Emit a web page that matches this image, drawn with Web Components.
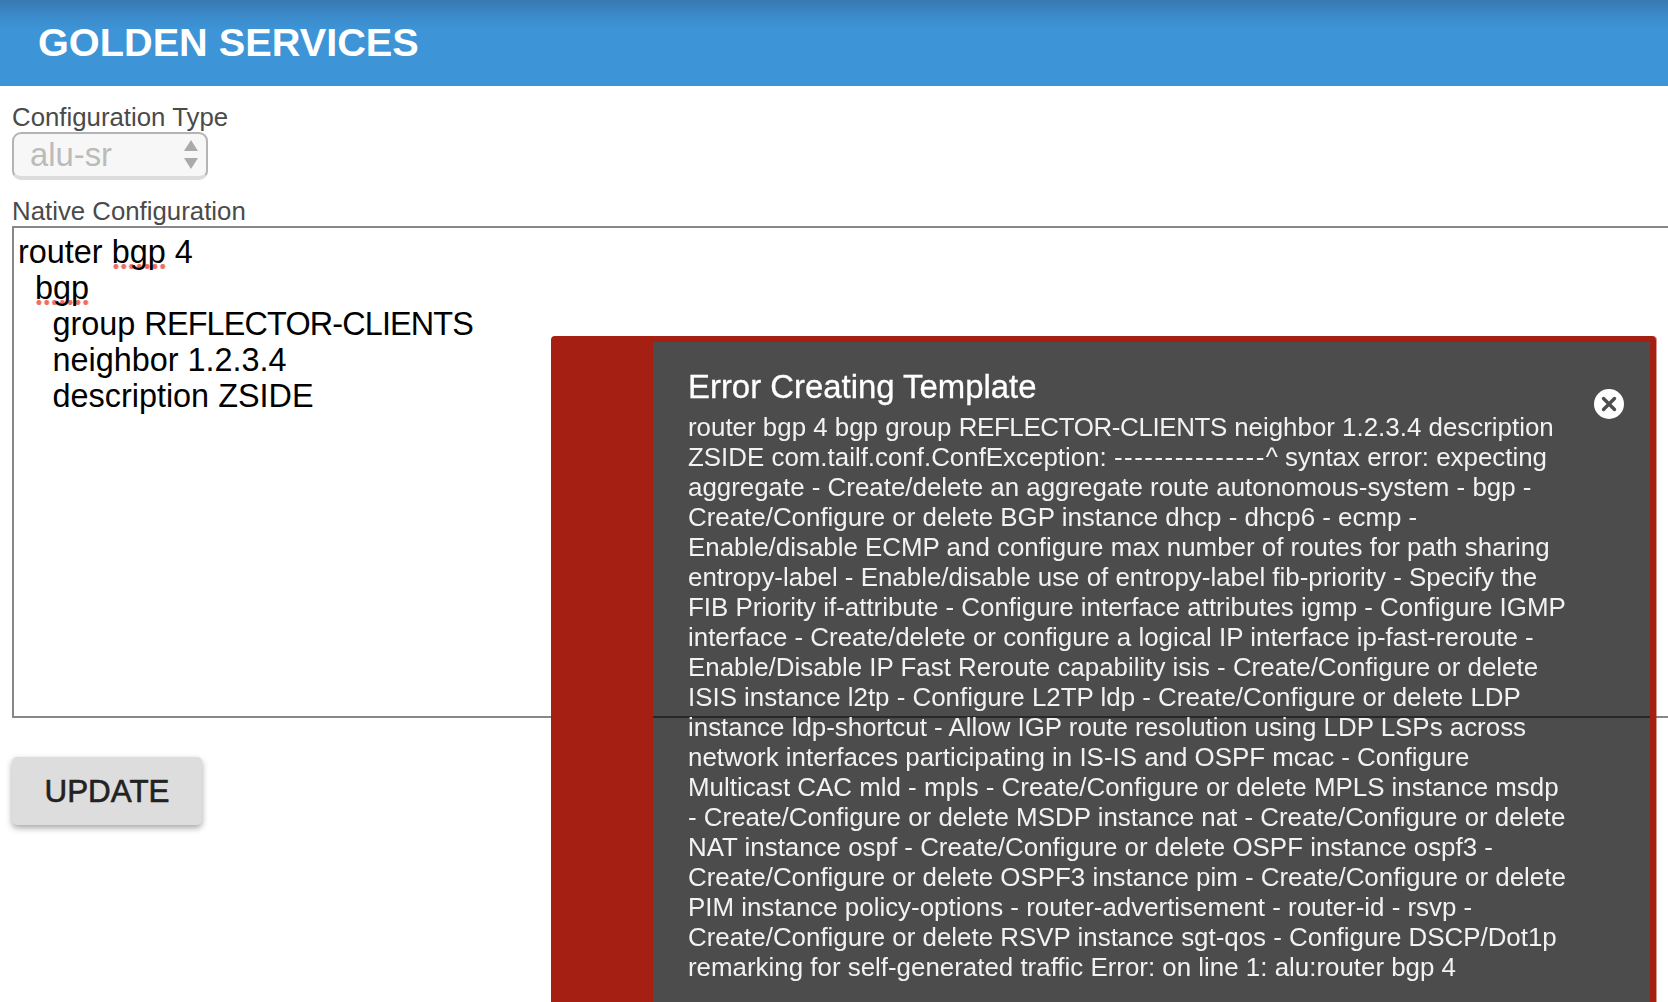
<!DOCTYPE html>
<html>
<head>
<meta charset="utf-8">
<title>Golden Services</title>
<style>
  html, body { margin: 0; height: 100%; overflow: hidden; background: #fff; }
  body { font-family: "Liberation Sans", Arial, sans-serif; }
  main { display: block; padding: 16px 0 0 12px; width: 1700px; }
</style>
</head>
<body>
<app-header>GOLDEN SERVICES</app-header>
<main>
  <field-label>Configuration Type</field-label>
  <config-select value="alu-sr"></config-select>
  <field-label style="margin-top:16px">Native Configuration</field-label>
  <config-editor></config-editor>
  <action-button>UPDATE</action-button>
</main>
<error-toast heading="Error Creating Template"></error-toast>

<script>
class AppHeader extends HTMLElement {
    constructor() {
        super();
        this.attachShadow({ mode: 'open' });
        this.shadowRoot.innerHTML = `
            <style>
                :host {
                    display: flex;
                    align-items: center;
                    height: 86px;
                    box-sizing: border-box;
                    padding: 0 0 2px 38px;
                    background: linear-gradient(#3878b0 0, #3b8bca 16px, #3d94d6 30px);
                    color: #fff;
                    font: bold 39.7px "Liberation Sans", Arial, sans-serif;
                }
            </style>
            <slot></slot>
        `;
    }
}
customElements.define('app-header', AppHeader);

class FieldLabel extends HTMLElement {
    constructor() {
        super();
        this.attachShadow({ mode: 'open' });
        this.shadowRoot.innerHTML = `
            <style>
                :host {
                    display: block;
                    height: 30px;
                    line-height: 30px;
                    color: #4a4a4a;
                    font-size: 25.8px;
                }
            </style>
            <slot></slot>
        `;
    }
}
customElements.define('field-label', FieldLabel);

class ConfigSelect extends HTMLElement {
    constructor() {
        super();
        this.attachShadow({ mode: 'open' });
        this.shadowRoot.innerHTML = `
            <style>
                :host { display: block; width: 195.5px; }
                .box {
                    display: flex;
                    align-items: center;
                    justify-content: space-between;
                    box-sizing: border-box;
                    height: 48px;
                    padding: 0 7px 0 16px;
                    border: 2px solid #b4b4b4;
                    border-bottom: 4px solid #dcdcdc;
                    border-radius: 9px;
                    background: #f7f7f7;
                    color: #bbb;
                    font-size: 32.8px;
                }
                svg { display: block; }
            </style>
            <div class="box">
                <span class="value"></span>
                <svg width="16" height="30" viewBox="0 0 16 30">
                    <path d="M8 0 L15 11 L1 11 Z M1 18 L15 18 L8 29 Z" fill="#aaa"/>
                </svg>
            </div>
        `;
    }

    connectedCallback() {
        this.shadowRoot.querySelector('.value').textContent = this.getAttribute('value');
    }
}
customElements.define('config-select', ConfigSelect);

class ConfigEditor extends HTMLElement {
    constructor() {
        super();
        this.attachShadow({ mode: 'open' });
        this.shadowRoot.innerHTML = `
            <style>
                :host {
                    display: block;
                    box-sizing: border-box;
                    height: 492px;
                    padding: 6px 4px;
                    border: 2px solid #888;
                    background: #fff;
                    color: #000;
                    font: 32.4px/36px "Liberation Sans", Arial, sans-serif;
                }
                div { white-space: pre; }
                .l1 { padding-left: 17px; }
                .l2 { padding-left: 34.5px; }
                .typo {
                    background-image: radial-gradient(circle, #ef6e64 0, #ef6e64 2.2px, transparent 2.8px);
                    background-size: 7.8px 6.8px;
                    background-position: 0 100%;
                    background-repeat: repeat-x;
                }
                .caps { letter-spacing: -.85px; }
            </style>
            <div>router <span class="typo">bgp</span> 4</div>
            <div class="l1"><span class="typo">bgp</span></div>
            <div class="l2">group <span class="caps">REFLECTOR-CLIENTS</span></div>
            <div class="l2">neighbor 1.2.3.4</div>
            <div class="l2">description ZSIDE</div>
        `;
    }
}
customElements.define('config-editor', ConfigEditor);

class ActionButton extends HTMLElement {
    constructor() {
        super();
        this.attachShadow({ mode: 'open' });
        this.shadowRoot.innerHTML = `
            <style>
                :host {
                    display: flex;
                    align-items: center;
                    justify-content: center;
                    box-sizing: border-box;
                    width: 190px;
                    height: 68px;
                    margin-top: 39px;
                    padding-top: 1px;
                    border-radius: 5px;
                    background: #ddd;
                    box-shadow: 0 3px 6px rgba(0, 0, 0, .35);
                    color: #222;
                    font-size: 31.4px;
                    -webkit-text-stroke: .6px #222;
                }
            </style>
            <slot></slot>
        `;
    }
}
customElements.define('action-button', ActionButton);

const errorLines = [
    'router bgp 4 bgp group <span class="caps">REFLECTOR-CLIENTS</span> neighbor 1.2.3.4 description',
    'ZSIDE com.tailf.conf.ConfException: <span class="dash">---------------</span>^ syntax error: expecting',
    'aggregate - Create/delete an aggregate route autonomous-system - bgp -',
    'Create/Configure or delete BGP instance dhcp - dhcp6 - ecmp -',
    'Enable/disable ECMP and configure max number of routes for path sharing',
    'entropy-label - Enable/disable use of entropy-label fib-priority - Specify the',
    'FIB Priority if-attribute - Configure interface attributes igmp - Configure IGMP',
    'interface - Create/delete or configure a logical IP interface ip-fast-reroute -',
    'Enable/Disable IP Fast Reroute capability isis - Create/Configure or delete',
    'ISIS instance l2tp - Configure L2TP ldp - Create/Configure or delete LDP',
    'instance ldp-shortcut - Allow IGP route resolution using LDP LSPs across',
    'network interfaces participating in IS-IS and OSPF mcac - Configure',
    'Multicast CAC mld - mpls - Create/Configure or delete MPLS instance msdp',
    '- Create/Configure or delete MSDP instance nat - Create/Configure or delete',
    'NAT instance ospf - Create/Configure or delete OSPF instance ospf3 -',
    'Create/Configure or delete OSPF3 instance pim - Create/Configure or delete',
    'PIM instance policy-options - router-advertisement - router-id - rsvp -',
    'Create/Configure or delete RSVP instance sgt-qos - Configure DSCP/Dot1p',
    'remarking for self-generated traffic Error: on line 1: alu:router bgp 4'
];

class ErrorToast extends HTMLElement {
    constructor() {
        super();
        this.attachShadow({ mode: 'open' });
        this.shadowRoot.innerHTML = `
            <style>
                :host {
                    position: fixed;
                    left: 551px;
                    top: 336px;
                    width: 1105px;
                    height: 690px;
                    box-sizing: border-box;
                    padding: 25px 72px 0 35px;
                    border: 6px solid #a51f13;
                    border-left-width: 102px;
                    border-radius: 4px;
                    background: rgba(0, 0, 0, .7);
                    box-shadow: 1px 0 0 rgba(165, 31, 19, .45);
                    color: #fff;
                }
                h3 {
                    margin: 0 0 5px;
                    font-size: 32.9px;
                    line-height: 40px;
                    font-weight: normal;
                    -webkit-text-stroke: .3px #fff;
                }
                .body {
                    font-size: 25.9px;
                    line-height: 30px;
                    white-space: nowrap;
                    color: #f2f2f2;
                }
                .dash { letter-spacing: 1.5px; }
                .caps { letter-spacing: -.35px; }
                .close {
                    position: absolute;
                    top: 47px;
                    right: 26.5px;
                    width: 30px;
                    height: 30px;
                }
            </style>
            <h3></h3>
            <div class="body"></div>
            <svg class="close" viewBox="0 0 30 30">
                <circle cx="15" cy="15" r="15" fill="#fff"/>
                <path d="M9.5 9.5 L20.5 20.5 M20.5 9.5 L9.5 20.5" stroke="#4d4d4d" stroke-width="3.4" stroke-linecap="round"/>
            </svg>
        `;
    }

    connectedCallback() {
        this.shadowRoot.querySelector('h3').textContent = this.getAttribute('heading');
        const body = this.shadowRoot.querySelector('.body');
        errorLines.forEach(line => {
            const row = document.createElement('div');
            row.innerHTML = line;
            body.appendChild(row);
        });
    }
}
customElements.define('error-toast', ErrorToast);
</script>
</body>
</html>
